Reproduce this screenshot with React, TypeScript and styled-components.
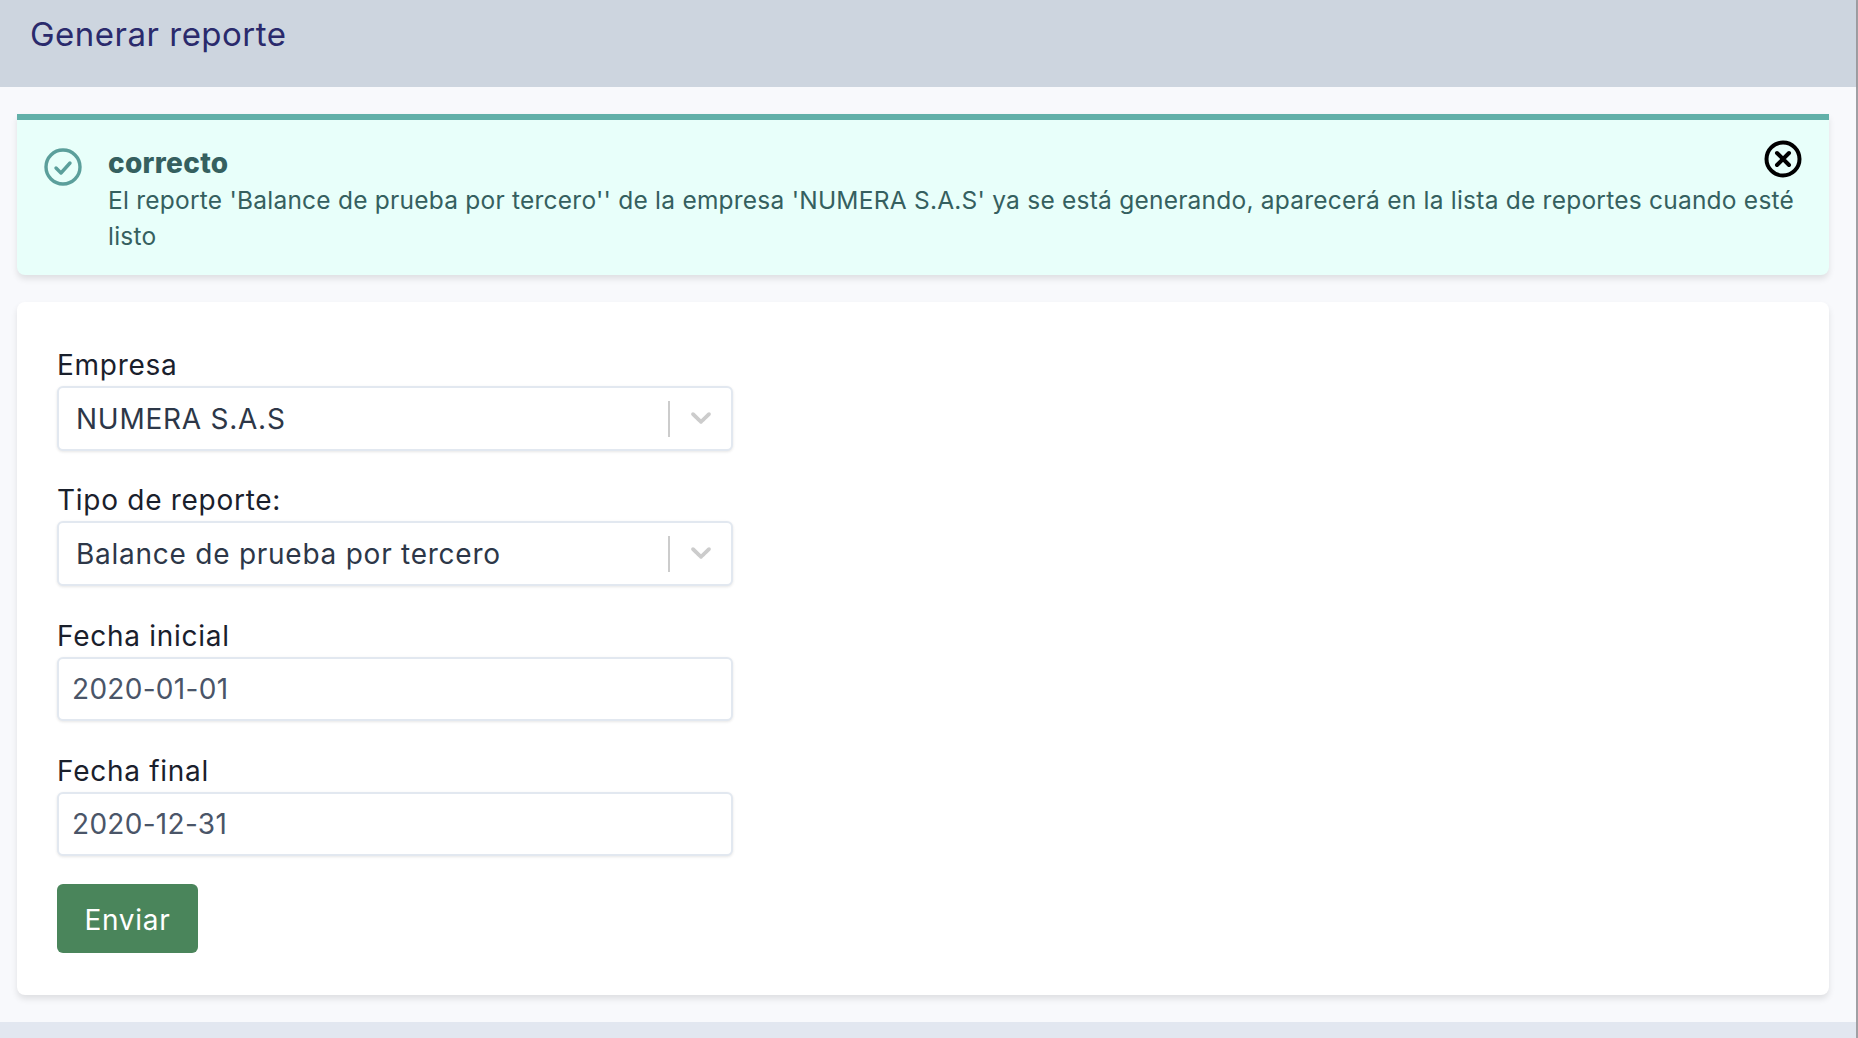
import styled, { createGlobalStyle } from "styled-components"

const GlobalStyle = createGlobalStyle`
  html, body {
    margin: 0;
    padding: 0;
    background: #e2e7f0;
    font-family: Inter, "Liberation Sans", sans-serif;
    overflow: hidden;
  }
`

const Page = styled.div`
  width: 1856px;
  height: 1038px;
  border-right: 2px solid #a0a0a4;
  background: #e2e7f0;
`

const Header = styled.header`
  height: 87px;
  background: #cdd5df;
  box-shadow: 0 1px 3px rgba(0, 0, 0, 0.08);
  padding: 15px 0 0 30px;
  box-sizing: border-box;
`

const Title = styled.h1`
  margin: 0;
  font-size: 33px;
  line-height: 38px;
  font-weight: 400;
  letter-spacing: 0.5px;
  color: #2a2a6c;
`

const Main = styled.main`
  height: 935px;
  box-sizing: border-box;
  background: #f8f9fc;
  padding: 27px 27px 0 17px;
`

const Alert = styled.div`
  position: relative;
  display: flex;
  gap: 26px;
  height: 161px;
  box-sizing: border-box;
  padding: 28px 27px 0;
  background: #e8fffa;
  border-top: 6px solid #62b0a9;
  border-radius: 0 0 8px 8px;
  box-shadow: 0 4px 6px rgba(0, 0, 0, 0.1);
  color: #35605f;
`

const AlertIcon = styled.svg`
  flex: none;
  width: 38px;
  height: 38px;
`

const AlertTitle = styled.div`
  font-size: 28px;
  line-height: 37px;
  font-weight: 800;
  letter-spacing: 0.3px;
  margin-top: -3px;
  margin-bottom: 1px;
`

const AlertText = styled.div`
  font-size: 24.5px;
  line-height: 35.5px;
  letter-spacing: 0.23px;
`

const CloseIcon = styled.svg`
  position: absolute;
  top: 20px;
  right: 27px;
  width: 38px;
  height: 38px;
`

const Card = styled.section`
  margin-top: 27px;
  height: 693px;
  box-sizing: border-box;
  padding: 47px 40px 0;
  background: #fff;
  border-radius: 8px;
  box-shadow: 0 4px 6px rgba(0, 0, 0, 0.1);
`

const Field = styled.div`
  width: 676px;
  height: 135.3px;
`

const Label = styled.div`
  height: 37px;
  font-size: 28px;
  line-height: 33px;
  letter-spacing: 0.72px;
  color: #1a202c;
`

const SelectBox = styled.div`
  display: flex;
  align-items: center;
  height: 65px;
  box-sizing: border-box;
  padding-left: 17px;
  border: 2px solid #e2e8f0;
  border-radius: 6px;
  box-shadow: 0 1px 3px rgba(0, 0, 0, 0.1);
  background: #fff;
  font-size: 28px;
  letter-spacing: 0.75px;
  color: #2d3748;
`

const SelectValue = styled.span`
  flex: 1;
`

const Divider = styled.span`
  width: 2px;
  height: 36px;
  background: #cccccc;
`

const Chevron = styled.svg`
  width: 34px;
  height: 34px;
  margin: -3px 13px 0 14px;
  fill: #cccccc;
`

const DateInput = styled.input`
  display: block;
  width: 100%;
  height: 64px;
  box-sizing: border-box;
  padding: 0 13px;
  border: 2px solid #e2e8f0;
  border-radius: 6px;
  box-shadow: 0 1px 3px rgba(0, 0, 0, 0.1);
  font-family: inherit;
  font-size: 28px;
  letter-spacing: 0.3px;
  color: #4a5568;
  outline: none;
`

const SubmitButton = styled.button`
  display: block;
  width: 141px;
  height: 69px;
  margin-top: -6px;
  padding: 2px 0 0;
  border: 0;
  border-radius: 6px;
  background: #4a855b;
  color: #fff;
  font-family: inherit;
  font-size: 28px;
  letter-spacing: 0.75px;
`

const Select = ({ label, value }: { label: string; value: string }) => (
  <Field>
    <Label>{label}</Label>
    <SelectBox>
      <SelectValue>{value}</SelectValue>
      <Divider />
      <Chevron viewBox="0 0 20 20">
        <path d="M4.516 7.548c0.436-0.446 1.043-0.481 1.576 0l3.908 3.747 3.908-3.747c0.533-0.481 1.141-0.446 1.576 0 0.436 0.445 0.408 1.197 0 1.615-0.406 0.418-4.695 4.502-4.695 4.502-0.217 0.223-0.502 0.335-0.789 0.335s-0.572-0.112-0.789-0.335c0 0-4.287-4.084-4.695-4.502s-0.436-1.17 0-1.615z" />
      </Chevron>
    </SelectBox>
  </Field>
)

const DateField = ({ label, value }: { label: string; value: string }) => (
  <Field>
    <Label>{label}</Label>
    <DateInput readOnly value={value} />
  </Field>
)

export default function App() {
  return (
    <Page>
      <GlobalStyle />
      <Header>
        <Title>Generar reporte</Title>
      </Header>
      <Main>
        <Alert>
          <AlertIcon viewBox="0 0 38 38" fill="none" stroke="#5b9f9b" strokeWidth="3.4" strokeLinecap="round" strokeLinejoin="round">
            <circle cx="19" cy="19" r="17" />
            <path d="M12 20l5 5 9-10" />
          </AlertIcon>
          <div>
            <AlertTitle>correcto</AlertTitle>
            <AlertText>
              El reporte 'Balance de prueba por tercero'' de la empresa 'NUMERA S.A.S' ya se está generando, aparecerá en la lista de reportes cuando esté listo
            </AlertText>
          </div>
          <CloseIcon viewBox="0 0 38 38" fill="none" stroke="#000" strokeWidth="4" strokeLinecap="round">
            <circle cx="19" cy="19" r="16.5" />
            <path d="M13 13l12 12M25 13L13 25" />
          </CloseIcon>
        </Alert>
        <Card>
          <Select label="Empresa" value="NUMERA S.A.S" />
          <Select label="Tipo de reporte:" value="Balance de prueba por tercero" />
          <DateField label="Fecha inicial" value="2020-01-01" />
          <DateField label="Fecha final" value="2020-12-31" />
          <SubmitButton>Enviar</SubmitButton>
        </Card>
      </Main>
    </Page>
  )
}
